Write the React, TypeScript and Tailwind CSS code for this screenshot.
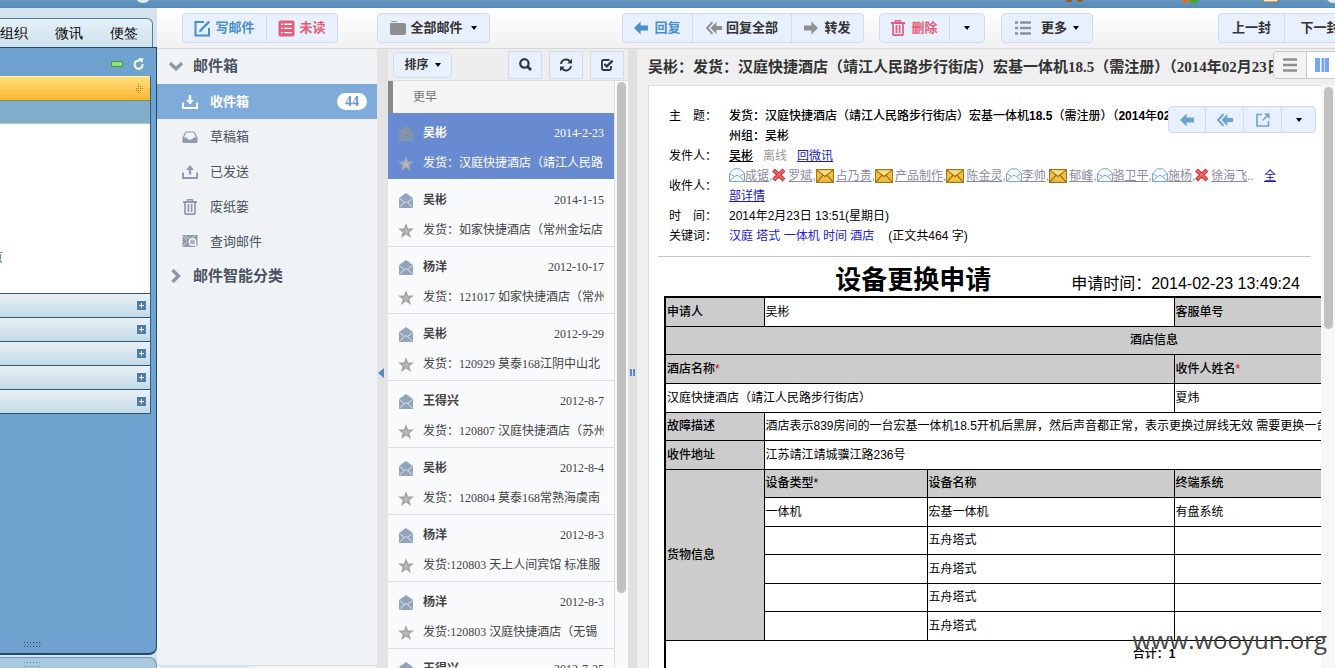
import React from "react";

type IconProps = { className?: string };

const ReplyIcon = ({ className = "" }: IconProps) => (
  <svg viewBox="0 0 14 14" className={`h-3.5 w-3.5 ${className}`} fill="currentColor" aria-hidden="true">
    <path d="M0 7 6.6 .6V4.6H14V9.4H6.6V13.4Z" />
  </svg>
);
const ForwardIcon = ({ className = "" }: IconProps) => (
  <svg viewBox="0 0 14 14" className={`h-3.5 w-3.5 ${className}`} fill="currentColor" aria-hidden="true">
    <path d="M14 7 7.4 .6V4.6H0V9.4H7.4V13.4Z" />
  </svg>
);
const ReplyAllIcon = ({ className = "" }: IconProps) => (
  <svg viewBox="0 0 16 14" className={`h-3.5 w-4 ${className}`} fill="currentColor" aria-hidden="true">
    <path d="M4.5 7 10.4 1V5H16V9H10.4V13Z" />
    <path d="M6.4 1.2 1.2 7l5.2 5.8" fill="none" stroke="currentColor" strokeWidth="2" />
  </svg>
);
const ComposeIcon = () => (
  <svg viewBox="0 0 17 17" className="h-[17px] w-[17px]" fill="none" stroke="#4a8fca" strokeWidth="2" aria-hidden="true">
    <path d="M10 2H1.5V15.5H15V8" />
    <path d="M6.5 10.5 15.2 1.6" strokeWidth="2.4" />
    <path d="M5 12.2 5.8 9.3 7.9 11.4Z" fill="#4a8fca" stroke="none" />
  </svg>
);
const UnreadIcon = () => (
  <svg viewBox="0 0 17 17" className="h-[17px] w-[17px]" aria-hidden="true">
    <rect x=".5" y=".5" width="16" height="16" rx="2" fill="#e65c78" />
    <path d="M3 4.2H14M3 8.4H14M3 12.6H14" stroke="#fff" strokeWidth="1.4" />
    <path d="M5.4 2V15" stroke="#e65c78" strokeWidth="1.2" />
  </svg>
);
const FolderIcon = () => (
  <svg viewBox="0 0 16 14" className="h-3.5 w-4" fill="#8f8f8f" aria-hidden="true">
    <path d="M1.5 0H6.5L7.5 1H1ZM0 2H14.5L16 3V12.5L15 14H1L0 12.5Z" />
  </svg>
);
const TrashIcon = ({ className = "" }: IconProps) => (
  <svg viewBox="0 0 14 16" className={`h-4 w-3.5 ${className}`} fill="none" stroke="currentColor" aria-hidden="true">
    <path d="M0 3H14" strokeWidth="2" />
    <path d="M4.5 2.5V.8H9.5V2.5" strokeWidth="1.4" />
    <path d="M2 3.5V14.2Q2 15.2 3 15.2H11Q12 15.2 12 14.2V3.5M5.4 5V13M8.6 5V13" strokeWidth="1.7" />
  </svg>
);
const ListIcon = () => (
  <svg viewBox="0 0 16 14" className="h-3.5 w-4" stroke="#909090" strokeWidth="2.4" aria-hidden="true">
    <path d="M0 1.5H3M5 1.5H16M0 7H3M5 7H16M0 12.5H3M5 12.5H16" />
  </svg>
);
const Caret = () => (
  <svg viewBox="0 0 6 4" className="h-1 w-1.5" fill="#000" aria-hidden="true">
    <path d="M0 0H6L3 4Z" />
  </svg>
);
const InboxIcon = () => (
  <svg viewBox="0 0 16 14" className="h-3.5 w-4" aria-hidden="true">
    <path d="M1 7.5V13H15V7.5" fill="none" stroke="currentColor" strokeWidth="2" />
    <path d="M6.8 0H9.2V5H12L8 9.6 4 5H6.8Z" fill="currentColor" />
  </svg>
);
const SentIcon = () => (
  <svg viewBox="0 0 16 14" className="h-3.5 w-4" aria-hidden="true">
    <path d="M1 7.5V13H15V7.5" fill="none" stroke="currentColor" strokeWidth="2" />
    <path d="M6.8 9.6H9.2V5H12L8 .2 4 5H6.8Z" fill="currentColor" />
  </svg>
);
const DraftIcon = () => (
  <svg viewBox="0 0 16 12" className="h-3 w-4" aria-hidden="true">
    <path d="M1 7 3.6 1.6Q4 1 4.8 1H11.2Q12 1 12.4 1.6L15 7" fill="none" stroke="currentColor" strokeWidth="1.2" />
    <path d="M.5 6.5H4.5L6 8.5H10L11.5 6.5H15.5V11Q15.5 12 14.5 12H1.5Q.5 12 .5 11Z" fill="currentColor" />
  </svg>
);
const FindMailIcon = () => (
  <svg viewBox="0 0 16 13" className="h-[13px] w-4" aria-hidden="true">
    <path d="M.5 0H15.5V12H.5Z" fill="currentColor" />
    <path d="M1 1 5 5.5M1 11 5 7M3 .8 8 4.5 13 .8" stroke="#eff3f6" strokeWidth=".7" fill="none" />
    <circle cx="10.5" cy="7" r="3.2" fill="#aab4c4" stroke="#eff3f6" strokeWidth="1.4" />
    <path d="M12.6 9.4 15.6 12.8" stroke="#eff3f6" strokeWidth="1.6" />
  </svg>
);
const OpenMail = ({ muted }: { muted?: boolean }) => (
  <svg viewBox="0 0 14 15" className="h-[15px] w-3.5" aria-hidden="true">
    <path d="M0 5 7 0 14 5V15H0Z" fill={muted ? "#8594ad" : "#92a3bb"} />
    <path d="M.5 5.5 5.5 9.5.5 14M13.5 5.5 8.5 9.5 13.5 14M5.5 9.5 7 8.6 8.5 9.5" fill="none" stroke={muted ? "#76899f" : "#e4ebf3"} strokeWidth=".9" />
  </svg>
);
const Star = ({ muted }: { muted?: boolean }) => (
  <svg viewBox="0 0 16 15" className="h-[15px] w-4" aria-hidden="true">
    <path d="M8 0 10 5.4 16 5.6 11.3 9.2 13 15 8 11.6 3 15 4.7 9.2 0 5.6 6 5.4Z" fill={muted ? "#a3a8b3" : "#a3a3a3"} />
    <path d="M8 4 9 7 12 7.2 9.6 9 10.4 11.6 8 10.2 5.6 11.6 6.4 9 4 7.2 7 7Z" fill="#b8b8b8" />
  </svg>
);

const MailMark = ({ kind }: { kind: string }) => {
  if (kind === "x")
    return (
      <svg viewBox="0 0 14 14" className="mr-0.5 inline h-3.5 w-3.5 align-[-2px]" aria-hidden="true">
        <path d="M1.5 2 12 12M12 2 1.5 12" stroke="#c92a2f" strokeWidth="4" />
        <path d="M2 2.5 11.5 11.5M11.5 2.5 2 11.5" stroke="#f0686a" strokeWidth="2" />
      </svg>
    );
  if (kind === "new")
    return (
      <svg viewBox="0 0 17 13" className="mr-0.5 inline h-3.5 w-[18px] align-[-3px]" aria-hidden="true">
        <path d="M.5 .5H16.5V12.5H.5Z" fill="#f3c044" stroke="#a87718" />
        <path d="M1 1 8.5 7 16 1M1 12 6.5 6M16 12 10.5 6" fill="none" stroke="#93660f" />
        <path d="M2 1.2H15L8.5 6Z" fill="#fbe08b" />
      </svg>
    );
  return (
    <svg viewBox="0 0 16 14" className="inline h-3.5 w-4 align-[-2px]" fill="none" stroke="#7fa9cb" aria-hidden="true">
      <path d="M.5 5.5 5 .8H11L15.5 5.5V13.5H.5Z" fill="#f4f9fd" />
      <path d="M.5 5.5 5.5 8.5.8 13M15.5 5.5 10.5 8.5 15.2 13M5.5 8.5Q8 5.8 10.5 8.5" />
    </svg>
  );
};

const serif = "font-['Liberation_Serif','Noto_Sans_CJK_SC',serif]";
const group = "flex h-[30px] shrink-0 overflow-hidden rounded border border-[#cfdcf0] bg-[#e8f0fd] divide-x divide-[#cfdcf0]";
const tool = "flex shrink-0 items-center justify-center";

const folders = [
  { name: "草稿箱", icon: <DraftIcon /> },
  { name: "已发送", icon: <SentIcon /> },
  { name: "废纸篓", icon: <TrashIcon /> },
  { name: "查询邮件", icon: <FindMailIcon /> },
];

const mails = [
  ["吴彬", "2014-2-23", "发货：汉庭快捷酒店（靖江人民路"],
  ["吴彬", "2014-1-15", "发货：如家快捷酒店（常州金坛店"],
  ["杨洋", "2012-10-17", "发货：121017 如家快捷酒店（常州"],
  ["吴彬", "2012-9-29", "发货：120929 莫泰168江阴中山北"],
  ["王得兴", "2012-8-7", "发货：120807 汉庭快捷酒店（苏州"],
  ["吴彬", "2012-8-4", "发货：120804 莫泰168常熟海虞南"],
  ["杨洋", "2012-8-3", "发货:120803 天上人间宾馆 标准服"],
  ["杨洋", "2012-8-3", "发货:120803 汉庭快捷酒店（无锡"],
  ["王得兴", "2012-7-25", "发货:120725 汉庭快捷酒店"],
];

const recipients = [
  ["open", "成锯"],
  ["x", "罗斌"],
  ["new", "占乃贵"],
  ["new", "产品制作"],
  ["new", "陈金灵"],
  ["open", "李帅"],
  ["new", "郁峰"],
  ["open", "骆卫平"],
  ["open", "施杨"],
  ["x", "徐海飞"],
];

function AppRail() {
  return (
    <aside className="flex w-[157px] shrink-0 flex-col overflow-hidden bg-[#d5e3ee] pt-2.5">
      <nav className="mr-1 flex h-[29px] shrink-0 items-center justify-between rounded-tr-md border-t border-r border-[#4d7f9f] bg-gradient-to-b from-[#e4f1f8] to-[#cfe2ec] pr-3.5 text-sm text-black">
        <a href="#org">组织</a>
        <a href="#talk">微讯</a>
        <a href="#note">便签</a>
      </nav>
      <div className="flex min-h-0 flex-1 flex-col rounded-br-lg border-t border-r border-b-2 border-[#1f4a70] bg-[#6fa2ce]">
        <div className="flex h-7 shrink-0 items-center justify-end gap-2.5 pt-1 pr-3">
          <button aria-label="收起" className="h-1.5 w-3 border border-[#3f9a4a] bg-[#8fe36c]" />
          <button aria-label="刷新" className="text-white">
            <svg viewBox="0 0 11 12" className="h-3 w-[11px]" fill="none" stroke="currentColor" strokeWidth="2" aria-hidden="true">
              <path d="M9.6 6.2A4 4.2 0 1 1 7 2.7" />
              <path d="M5.5 0 10.5 .6 9 5.2Z" fill="currentColor" stroke="none" />
            </svg>
          </button>
        </div>
        <div className="mr-[5px] flex flex-col border-r border-[#2f5f86]">
          <div className="flex h-[25px] items-center justify-end border-t border-b border-t-[#fff0c0] border-b-[#7e8a75] bg-gradient-to-b from-[#ffe07a] to-[#fbb829] pr-1.5">
            <svg viewBox="0 0 8 10" className="h-2.5 w-2" fill="#a5731a" aria-hidden="true">
              <path d="M2 0H3V1H2ZM2 2H3V3H2ZM4 2H5V3H4ZM0 4H1V5H0ZM2 4H3V5H2ZM4 4H5V5H4ZM6 4H7V5H6ZM0 6H1V7H0ZM2 6H3V7H2ZM4 6H5V7H4ZM2 8H3V9H2Z" />
            </svg>
          </div>
          <div className="h-[23px] border-b border-[#a9c7db] bg-[#82adcb]" />
          <div className="flex h-[169px] items-end overflow-hidden bg-white pb-7 text-xs leading-4 text-[#333]">
            <span className="-ml-[9px]">页</span>
          </div>
          {["a", "b", "c", "d", "e"].map((k) => (
            <div key={k} className="flex h-6 items-center justify-end border-t border-[#2f5575] bg-gradient-to-b from-[#eaf2f6] to-[#c3dae8] pr-1">
              <button aria-label="展开" className="flex h-[9px] w-[9px] items-center justify-center bg-[#4f7ca3]">
                <svg viewBox="0 0 7 7" className="h-[7px] w-[7px]" stroke="#fff" aria-hidden="true">
                  <path d="M1 3.5H6M3.5 1V6" />
                </svg>
              </button>
            </div>
          ))}
          <div className="h-px bg-[#2f5575]" />
        </div>
        <div className="flex flex-1 items-end pb-1.5 pl-6">
          <svg viewBox="0 0 17 5" className="h-[5px] w-[17px]" stroke="#1f4a70" strokeDasharray="1 2" aria-hidden="true">
            <path d="M0 .5H17M0 4.5H17" />
            <path d="M1 2.5H17" stroke="#4a7ba6" />
          </svg>
        </div>
      </div>
      <div className="mt-0.5 h-[11px] shrink-0 rounded-tr-lg border-t border-r border-[#7698b0] bg-[#a8c8dd] pt-1 pl-6">
        <svg viewBox="0 0 17 5" className="h-[5px] w-[17px]" stroke="#5f89a8" strokeDasharray="1 2" aria-hidden="true">
          <path d="M0 .5H17M0 4.5H17" />
        </svg>
      </div>
    </aside>
  );
}

function Toolbar() {
  return (
    <div className={`${serif} flex h-[41px] shrink-0 items-center overflow-hidden border-b border-[#d6d6d6] bg-gradient-to-b from-white to-[#f1f1f1] pl-[25px] text-[13px] font-bold text-[#333]`}>
      <div className={`${group} mr-[39px]`}>
        <button className={`${tool} w-[84px] gap-1 text-[#4a8fca]`}><ComposeIcon />写邮件</button>
        <button className={`${tool} w-[70px] gap-1 text-[#e65c78]`}><UnreadIcon />未读</button>
      </div>
      <div className={`${group} mr-[132px]`}>
        <button className={`${tool} w-[111px] gap-1`}><FolderIcon />全部邮件<span className="pl-1"><Caret /></span></button>
      </div>
      <div className={`${group} mr-[15px]`}>
        <button className={`${tool} w-[70px] gap-1.5 text-[#4a8fca]`}><ReplyIcon />回复</button>
        <button className={`${tool} w-[99px] gap-1`}><ReplyAllIcon className="text-[#8f8f8f]" />回复全部</button>
        <button className={`${tool} w-[71px] gap-1.5`}><ForwardIcon className="text-[#8f8f8f]" />转发</button>
      </div>
      <div className={`${group} mr-4`}>
        <button className={`${tool} w-[70px] gap-1.5 text-[#e65c78]`}><TrashIcon />删除</button>
        <button className={`${tool} w-[34px]`} aria-label="删除选项"><Caret /></button>
      </div>
      <div className={group}>
        <button className={`${tool} w-[90px]`}><ListIcon /><span className="pr-1.5 pl-2.5">更多</span><Caret /></button>
      </div>
      <div className={`${group} -mr-[21px] ml-auto`}>
        <button className={`${tool} w-[66px]`}>上一封</button>
        <button className={`${tool} w-[70px]`}>下一封</button>
      </div>
    </div>
  );
}

function Folders() {
  return (
    <nav className={`${serif} flex w-[220px] shrink-0 flex-col bg-[#eff3f6] text-[13px] text-[#4b5361]`}>
      <button className="flex h-[35px] items-center gap-2.5 pl-3 text-[15px] font-bold">
        <svg viewBox="0 0 14 9" className="h-[9px] w-3.5" fill="none" stroke="#8e97a6" strokeWidth="3.4" aria-hidden="true"><path d="M1 1.2 7 6.8 13 1.2" /></svg>
        邮件箱
      </button>
      <a href="#inbox" className="flex h-[35px] items-center bg-[#7fabda] pr-2.5 pl-[25px] font-bold text-white">
        <InboxIcon />
        <span className="ml-3">收件箱</span>
        <span className="ml-auto flex h-[17px] w-[30px] items-center justify-center rounded-full bg-white text-sm leading-4 text-[#6b94c4]">44</span>
      </a>
      {folders.map((f) => (
        <a key={f.name} href="#folder" className="flex h-[35px] items-center gap-3 pl-[25px]">
          <span className="flex w-4 justify-center text-[#8e9aad]">{f.icon}</span>
          {f.name}
        </a>
      ))}
      <button className="flex h-[34px] items-center gap-3 pl-3.5 text-[15px] font-bold">
        <svg viewBox="0 0 10 14" className="h-3.5 w-2.5" fill="none" stroke="#8e97a6" strokeWidth="3.4" aria-hidden="true"><path d="M1.5 1 7.5 7 1.5 13" /></svg>
        邮件智能分类
      </button>
      <div className="mt-auto flex h-[3px] border-t border-[#d4dfea] pl-1">
        <span className="w-[88px] bg-[#d9e5f1]" />
      </div>
    </nav>
  );
}

function MailList() {
  const square = "flex h-7 w-[34px] items-center justify-center border border-[#cfdcf0] bg-[#e8f0fd]";
  return (
    <section className={`${serif} flex w-60 shrink-0 flex-col overflow-hidden bg-[#eee] text-xs text-[#444]`}>
      <div className="flex h-8 shrink-0 items-center border-b border-[#dcdcdc] pr-1 pl-[5px]">
        <button className="mr-auto flex h-[26px] w-[59px] items-center justify-center gap-1.5 rounded border border-[#cfdcf0] bg-[#e8f0fd] font-bold text-[#333]">排序<Caret /></button>
        <div className="flex gap-[7px]">
          <button className={square} aria-label="搜索">
            <svg viewBox="0 0 13 13" className="h-[13px] w-[13px]" fill="none" stroke="#2f3542" strokeWidth="2.2" aria-hidden="true"><circle cx="5.4" cy="5.4" r="4.2" /><path d="M8.4 8.4 12 12" strokeWidth="2.8" /></svg>
          </button>
          <button className={square} aria-label="刷新">
            <svg viewBox="0 0 14 14" className="h-3.5 w-3.5" fill="none" stroke="#2f3542" strokeWidth="1.8" aria-hidden="true"><path d="M2 6A5 5 0 0 1 11 3.6M12 8A5 5 0 0 1 3 10.4" /><path d="M13 .8V5.6H8.2ZM1 13.2V8.4H5.8Z" fill="#2f3542" stroke="none" /></svg>
          </button>
          <button className={square} aria-label="全选">
            <svg viewBox="0 0 14 14" className="h-3.5 w-3.5" fill="none" stroke="#2f3542" strokeWidth="1.8" aria-hidden="true"><path d="M9.5 2H3.4Q2 2 2 3.4V10.6Q2 12 3.4 12H9.6Q11 12 11 10.6V8" /><path d="M4.4 6 6.8 8.4 12.6 2.6" strokeWidth="2.2" /></svg>
          </button>
        </div>
      </div>
      <div className="flex min-h-0 flex-1 overflow-hidden">
        <div className="min-w-0 flex-1 border-r border-[#d9dee3] bg-[#f9fafc]">
          <h2 className="flex h-8 items-center border-l-[5px] border-[#8a8a8a] bg-[#f4f4f4] pl-5 text-[#777]">更早</h2>
          <ul>
            {mails.map(([name, date, subject], i) => (
              <li key={i} className={`h-[67px] border-b pt-[5px] pr-2.5 pl-2.5 ${i === 0 ? "border-[#f9fafc] bg-[#688ad0] text-white" : "border-[#d9dde2]"}`}>
                <div className="flex h-[30px] items-center gap-[9px]">
                  <span className="flex w-4 shrink-0 justify-center"><OpenMail muted={i === 0} /></span>
                  <b>{name}</b>
                  <time className="ml-auto">{date}</time>
                </div>
                <div className="flex h-[30px] items-center gap-[9px]">
                  <span className="shrink-0"><Star muted={i === 0} /></span>
                  <span className="overflow-hidden whitespace-nowrap">{subject}</span>
                </div>
              </li>
            ))}
          </ul>
        </div>
        <div className="w-[13px] shrink-0 bg-[#fafafa] pt-px pl-0.5">
          <div className="h-[511px] w-[9px] rounded-full bg-[#c1c1c1]" />
        </div>
      </div>
    </section>
  );
}

const G = ({ children, span = 1, rows = 1, center = false }: { children?: React.ReactNode; span?: number; rows?: number; center?: boolean }) => (
  <th colSpan={span} rowSpan={rows} className={`border border-black bg-[#cccccc] p-px font-medium ${center ? "text-center" : "text-left"}`}>{children}</th>
);
const W = ({ children, span = 1 }: { children?: React.ReactNode; span?: number }) => (
  <td colSpan={span} className="border border-black bg-white p-px whitespace-nowrap">{children}</td>
);

function RequestForm() {
  return (
    <div className="w-[980px]">
      <div className="flex h-[39px] items-end justify-center gap-20 pr-[173px]">
        <h2 className="text-[26px] leading-8 font-bold">设备更换申请</h2>
        <p className="text-base leading-6">申请时间：2014-02-23 13:49:24</p>
      </div>
      <table className="w-full table-fixed border-collapse border-2 border-black text-xs leading-4">
        <colgroup>
          <col className="w-[99px]" />
          <col className="w-[163px]" />
          <col className="w-[247px]" />
          <col />
        </colgroup>
        <tbody>
          <tr className="h-[29px]"><G>申请人</G><W span={2}>吴彬</W><G>客服单号</G></tr>
          <tr className="h-7"><G span={4} center>酒店信息</G></tr>
          <tr className="h-[29px]"><G span={3}>酒店名称<span className="text-red-600">*</span></G><G>收件人姓名<span className="text-red-600">*</span></G></tr>
          <tr className="h-[29px]"><W span={3}>汉庭快捷酒店（靖江人民路步行街店）</W><W>夏炜</W></tr>
          <tr className="h-7"><G>故障描述</G><W span={3}>酒店表示839房间的一台宏基一体机18.5开机后黑屏，然后声音都正常，表示更换过屏线无效 需要更换一台</W></tr>
          <tr className="h-[29px]"><G>收件地址</G><W span={3}>江苏靖江靖城骥江路236号</W></tr>
          <tr className="h-7"><G rows={6}>货物信息</G><G>设备类型*</G><G>设备名称</G><G>终端系统</G></tr>
          <tr className="h-[29px]"><W>一体机</W><W>宏基一体机</W><W>有盘系统</W></tr>
          <tr className="h-7"><W /><W>五舟塔式</W><W /></tr>
          <tr className="h-[29px]"><W /><W>五舟塔式</W><W /></tr>
          <tr className="h-7"><W /><W>五舟塔式</W><W /></tr>
          <tr className="h-[29px]"><W /><W>五舟塔式</W><W /></tr>
          <tr className="h-[29px]"><td colSpan={4} className="text-center font-medium">合计：<b>1</b></td></tr>
        </tbody>
      </table>
    </div>
  );
}

function Reader() {
  return (
    <section className="flex min-w-0 flex-1 flex-col bg-[#efefef] pl-[11px]">
      <header className="flex h-9 shrink-0 items-center">
        <h1 className={`${serif} min-w-0 flex-1 overflow-hidden text-[15px] font-bold whitespace-nowrap text-[#333]`}>
          吴彬：发货：汉庭快捷酒店（靖江人民路步行街店）宏基一体机18.5（需注册）（2014年02月23日
        </h1>
        <div className="-mr-1 mb-1 flex h-7 w-[66px] shrink-0 overflow-hidden rounded border border-[#c9c9c9]">
          <button className="flex flex-1 items-center justify-center border-r border-[#c9c9c9] bg-[#f3f3f3]" aria-label="列表视图">
            <svg viewBox="0 0 14 14" className="h-3.5 w-3.5" stroke="#8f8f8f" strokeWidth="2.6" aria-hidden="true"><path d="M0 1.5H14M0 7H14M0 12.5H14" /></svg>
          </button>
          <button className="flex flex-1 items-center justify-center bg-white" aria-label="分栏视图">
            <svg viewBox="0 0 14 14" className="h-3.5 w-3.5" fill="#73a7f5" aria-hidden="true"><path d="M0 0H5V14H0ZM6.5 0H14V14H6.5Z" /><path d="M9 0H10V14H9Z" fill="#c4dafb" /></svg>
          </button>
        </div>
      </header>
      <div className="flex min-h-0 flex-1">
        <article className="relative min-w-0 flex-1 overflow-hidden border-t border-l border-[#dcdcdc] bg-white pt-5 font-['Liberation_Sans','Noto_Sans_CJK_SC',sans-serif] text-xs text-black">
          <dl className="grid grid-cols-[60px_1fr] items-center pr-10 pl-5 leading-5">
            <dt className="self-start">主　题：</dt>
            <dd className="font-medium whitespace-nowrap">
              发货：汉庭快捷酒店（靖江人民路步行街店）宏基一体机<b>18.5</b>（需注册）（<b>2014</b>年<b>02</b>月<b>23</b>日
              <br />州组：吴彬
            </dd>
            <dt>发件人：</dt>
            <dd className="flex gap-2.5">
              <a href="#sender" className="font-medium underline">吴彬</a>
              <span className="text-[#999]">离线</span>
              <a href="#chat" className="text-[#1a1ab8] underline">回微讯</a>
            </dd>
            <dt>收件人：</dt>
            <dd>
              {recipients.map(([kind, name], i) => (
                <span key={name} className="text-[#8b8ba0]">
                  <MailMark kind={kind} />
                  <a href="#contact" className="underline">{name}</a>
                  {i < recipients.length - 1 ? "," : ".."}
                </span>
              ))}
              <a href="#all" className="ml-2.5 text-[#1a1ab8] underline">全部详情</a>
            </dd>
            <dt>时　间：</dt>
            <dd>2014年2月23日 13:51(星期日)</dd>
            <dt>关键词：</dt>
            <dd><span className="mr-3.5 text-[#2222cc]">汉庭 塔式 一体机 时间 酒店</span>(正文共464 字)</dd>
          </dl>
          <hr className="mt-2.5 mr-2.5 ml-[9px] border-[#c4c4c4]" />
          <div className="overflow-hidden pl-[15px]">
            <RequestForm />
          </div>
          <div className="absolute top-5 right-[5px] flex h-[27px] divide-x divide-[#cfdcf0] overflow-hidden rounded border border-[#cfdcf0] bg-[#e8f0fd] text-[#6ea3cf]">
            <button className={`${tool} w-[37px]`} aria-label="回复"><ReplyIcon /></button>
            <button className={`${tool} w-[38px]`} aria-label="回复全部"><ReplyAllIcon /></button>
            <button className={`${tool} w-[38px]`} aria-label="新窗口打开">
              <svg viewBox="0 0 14 14" className="h-3.5 w-3.5" fill="none" stroke="currentColor" strokeWidth="1.6" aria-hidden="true"><path d="M6 1.5H1V13H12.5V8" /><path d="M6.5 7.5 11 3" /><path d="M8 .5H13.5V6Z" fill="currentColor" stroke="none" /></svg>
            </button>
            <button className={`${tool} w-[33px]`} aria-label="更多操作"><Caret /></button>
          </div>
        </article>
        <div className="w-3.5 shrink-0 bg-[#f7f7f7] pt-0.5 pl-[3px]">
          <div className="h-[242px] w-[9px] rounded-full bg-[#c1c1c1]" />
        </div>
      </div>
    </section>
  );
}

export default function App() {
  return (
    <div className="relative flex h-screen flex-col overflow-hidden bg-white">
      <div className="flex h-2 shrink-0 justify-between bg-gradient-to-b from-[#6496bf] to-[#578ab5]">
        <svg viewBox="0 0 157 8" className="h-2 w-[157px]" aria-hidden="true"><circle cx="143" cy="-5" r="8" fill="#dfeaf3" /></svg>
        <svg viewBox="0 0 275 8" className="h-2 w-[275px]" aria-hidden="true">
          <path d="M6 1H12M17 1H23" stroke="#94602c" strokeWidth="2" />
          <path d="M121 0H132L128 3H124Z" fill="#c87a2a" />
          <path d="M130 0H139L136 3.5H132Z" fill="#45a52f" />
          <path d="M203 -1H218V2H203Z" fill="#f2e6cf" stroke="#9a6a35" />
          <circle cx="273" cy="-4" r="7" fill="#dfeaf3" />
        </svg>
      </div>
      <div className="flex min-h-0 flex-1">
        <AppRail />
        <main className="flex min-w-0 flex-1 flex-col">
          <Toolbar />
          <div className="flex min-h-0 flex-1">
            <Folders />
            <div className="flex w-[11px] shrink-0 items-center justify-start bg-[#e4e4e4] pt-7">
              <svg viewBox="0 0 6 10" className="ml-px h-2.5 w-1.5" fill="#5b86c9" aria-hidden="true"><path d="M6 0V10L0 5Z" /></svg>
            </div>
            <MailList />
            <div className="flex w-[9px] shrink-0 items-center justify-center bg-[#e0e0e0] pt-7">
              <svg viewBox="0 0 5 7" className="h-[7px] w-[5px]" fill="#5b86c9" aria-hidden="true"><path d="M0 0H2V7H0ZM3 0H5V7H3Z" /></svg>
            </div>
            <Reader />
          </div>
        </main>
      </div>
      <p className="pointer-events-none absolute right-2 bottom-3 font-['Open_Sans',sans-serif] text-2xl text-[#444]">www.wooyun.org</p>
    </div>
  );
}
